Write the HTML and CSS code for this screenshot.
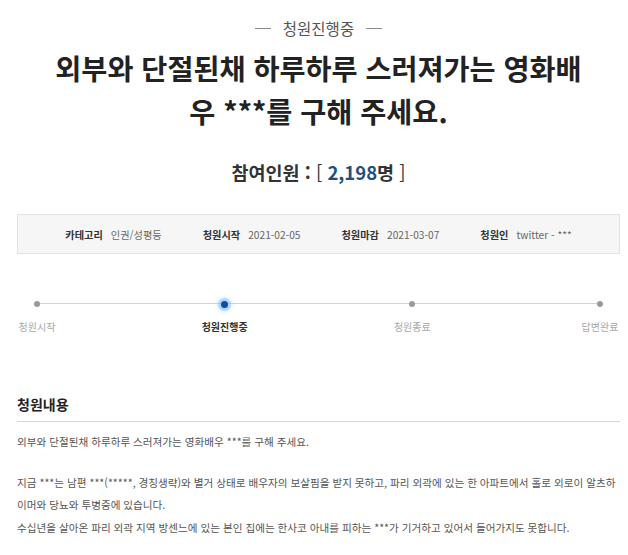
FILE: index.html
```html
<!DOCTYPE html>
<html lang="ko">
<head>
<meta charset="utf-8">
<title>청원진행중</title>
<link rel="stylesheet" href="styles.css">
</head>
<body>
<div class="page">
  <div class="status">청원진행중</div>
  <h1 class="title">외부와 단절된채 하루하루 스러져가는 영화배우 ***를 구해 주세요.</h1>
  <p class="count">참여인원 : <span class="br">[</span> <span class="num">2,198</span>명 <span class="br">]</span></p>

  <ul class="info">
    <li><b>카테고리</b><span>인권/성평등</span></li>
    <li><b>청원시작</b><span>2021-02-05</span></li>
    <li><b>청원마감</b><span>2021-03-07</span></li>
    <li><b>청원인</b><span>twitter - ***</span></li>
  </ul>

  <ol class="steps">
    <li class="step"><i class="dot"></i><span>청원시작</span></li>
    <li class="step active"><i class="dot"></i><span>청원진행중</span></li>
    <li class="step"><i class="dot"></i><span>청원종료</span></li>
    <li class="step"><i class="dot"></i><span>답변완료</span></li>
  </ol>

  <h2 class="section">청원내용</h2>
  <div class="content">
    <p>외부와 단절된채 하루하루 스러져가는 영화배우 ***를 구해 주세요.</p>
    <p>지금 ***는 남편 ***(*****, 경칭생략)와 별거 상태로 배우자의 보살핌을 받지 못하고, 파리 외곽에 있는 한 아파트에서 홀로 외로이 알츠하이머와 당뇨와 투병중에 있습니다.<br>수십년을 살아온 파리 외곽 지역 방센느에 있는 본인 집에는 한사코 아내를 피하는 ***가 기거하고 있어서 들어가지도 못합니다.</p>
  </div>
</div>
</body>
</html>
```
FILE: styles.css
```css
* { box-sizing: border-box; }
html, body { margin: 0; padding: 0; background: #fff; }
body {
  font-family: "Noto Sans CJK KR", "Noto Sans", sans-serif;
  color: #222;
}
.page {
  width: 628px;
  padding: 18px 8px 0 17px;
}
.status {
  display: flex;
  justify-content: center;
  align-items: center;
  gap: 12px;
  font-size: 15.5px;
  line-height: 20px;
  color: #555;
}
.status::before, .status::after {
  content: "";
  width: 16px;
  height: 1px;
  background: #8a8a8a;
}
.title {
  margin: 8px auto 0;
  width: 545px;
  font-size: 28.3px;
  line-height: 43px;
  font-weight: 700;
  text-align: center;
  word-break: break-all;
  color: #222;
}
.count {
  margin: 26px 0 0;
  text-align: center;
  font-size: 18.5px;
  line-height: 28px;
  font-weight: 700;
  color: #333;
}
.count .br { font-weight: 400; }
.count .num { color: #1f4f80; }
.info {
  list-style: none;
  margin: 28px 0 0;
  padding: 0;
  height: 40px;
  border: 1px solid #e2e2e2;
  background: #f6f6f6;
  display: flex;
  justify-content: center;
  align-items: center;
  gap: 41px;
  font-size: 10.2px;
}
.info li { display: flex; gap: 8px; }
.info b { color: #333; font-weight: 700; }
.info span { color: #666; }
.steps {
  list-style: none;
  margin: 44px 0 0 -3px;
  padding: 0;
  width: 609px;
  display: flex;
  justify-content: space-between;
  position: relative;
}
.steps::before {
  content: "";
  position: absolute;
  left: 23px;
  right: 23px;
  top: 5px;
  height: 1px;
  background: #d3d3d3;
}
.step {
  width: 46px;
  display: flex;
  flex-direction: column;
  align-items: center;
  gap: 9px;
  position: relative;
}
.dot {
  width: 12px;
  height: 12px;
  display: flex;
  align-items: center;
  justify-content: center;
}
.dot::after {
  content: "";
  width: 6px;
  height: 6px;
  border-radius: 50%;
  background: #9a9a9a;
}
.active .dot::after {
  width: 7px;
  height: 7px;
  background: #0d4f9a;
  box-shadow: 0 0 0 3px rgba(120, 185, 255, 0.45), 0 0 4px 4px rgba(150, 200, 255, 0.35);
}
.step span {
  font-size: 10px;
  line-height: 16px;
  color: #a8a8a8;
  white-space: nowrap;
}
.active span { color: #333; font-weight: 700; }
.section {
  margin: 59px 0 0;
  padding-bottom: 7px;
  border-bottom: 1px solid #d6d6d6;
  font-size: 14px;
  line-height: 20px;
  font-weight: 700;
  color: #222;
}
.content {
  padding-top: 9px;
  font-size: 10.6px;
  line-height: 22.5px;
  color: #555;
  word-break: break-all;
}
.content p { margin: 0 0 18px; }
```
